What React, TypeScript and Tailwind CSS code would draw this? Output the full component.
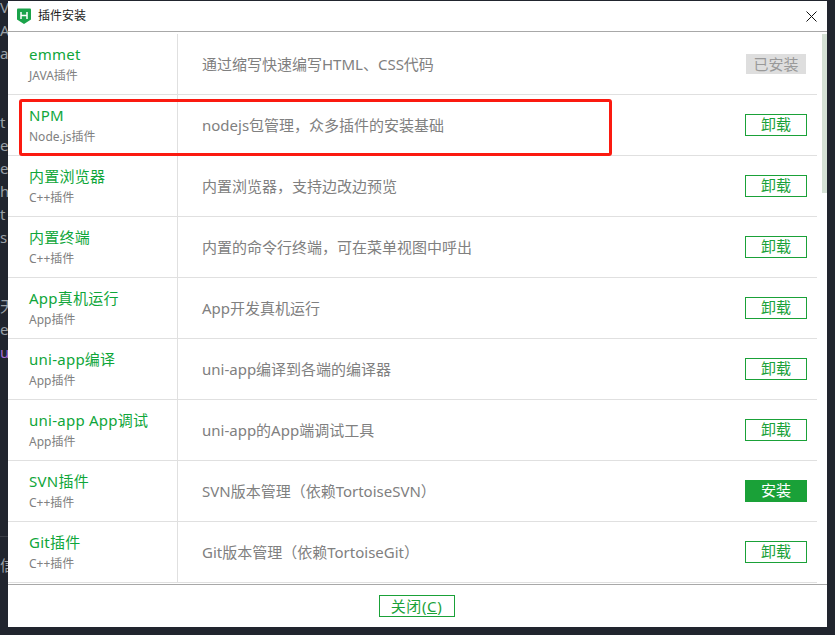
const plugins = [
  { name: "emmet", sub: "JAVA插件", desc: "通过缩写快速编写HTML、CSS代码", action: "installed" },
  { name: "NPM", sub: "Node.js插件", desc: "nodejs包管理，众多插件的安装基础", action: "remove" },
  { name: "内置浏览器", sub: "C++插件", desc: "内置浏览器，支持边改边预览", action: "remove" },
  { name: "内置终端", sub: "C++插件", desc: "内置的命令行终端，可在菜单视图中呼出", action: "remove" },
  { name: "App真机运行", sub: "App插件", desc: "App开发真机运行", action: "remove" },
  { name: "uni-app编译", sub: "App插件", desc: "uni-app编译到各端的编译器", action: "remove" },
  { name: "uni-app App调试", sub: "App插件", desc: "uni-app的App端调试工具", action: "remove" },
  { name: "SVN插件", sub: "C++插件", desc: "SVN版本管理（依赖TortoiseSVN）", action: "install" },
  { name: "Git插件", sub: "C++插件", desc: "Git版本管理（依赖TortoiseGit）", action: "remove" },
];

const editorLines = ["V", "A", "a", "", "", "t", "e", "e", "h", "t", "s", "", "", "天", "e", "u"];

function Action({ kind }: { kind: string }) {
  if (kind === "installed") {
    return (
      <span className="mr-px flex h-5 w-[60px] items-center justify-center bg-[#dedede] text-[15px] text-[#999999]">
        已安装
      </span>
    );
  }
  if (kind === "install") {
    return (
      <button className="h-[22px] w-[62px] bg-[#1aa138] pb-[2px] text-[15px] leading-[20px] text-white">安装</button>
    );
  }
  return (
    <button className="h-[22px] w-[62px] border border-[#1aa138] bg-white pb-[2px] text-[15px] leading-[18px] text-[#1aa138]">
      卸载
    </button>
  );
}

function Row({ plugin }: { plugin: (typeof plugins)[number] }) {
  return (
    <div className="flex h-[61px] shrink-0 border-b border-[#e0e0e0]">
      <div className="flex w-[170px] flex-col border-r border-[#e0e0e0] pl-[21px] pt-[9px]">
        <span className="h-[23px] text-[15px] leading-[23px] tracking-[0.25px] text-[#0fa63a]">{plugin.name}</span>
        <span className="mt-[1px] h-[18px] text-xs leading-[18px] text-[#808080]">{plugin.sub}</span>
      </div>
      <div className="flex flex-1 items-center justify-between pl-6 pr-[10px]">
        <span className="text-[15px] leading-[22px] text-[#808080]">{plugin.desc}</span>
        <Action kind={plugin.action} />
      </div>
    </div>
  );
}

export default function App() {
  return (
    <div className="relative flex h-[635px] w-[835px] overflow-hidden bg-[#21252e] font-['Noto_Sans','Noto_Sans_CJK_SC',sans-serif]">
      <div className="-mt-1 w-2 shrink-0 overflow-hidden text-[15px] leading-[23px] text-[#9aa0a6]">
        {editorLines.map((line, i) => (
          <div key={i} className={`h-[23px] ${line === "u" ? "text-[#a36ad0]" : ""}`}>
            {line}
          </div>
        ))}
        <div className="mt-[172px] h-px bg-[#3a3d45]" />
        <div className="mt-[17px] h-[23px]">信</div>
      </div>

      <div className="mt-[1px] flex h-[626px] w-[819px] flex-col bg-white">
        <div className="flex h-[31px] shrink-0 items-center justify-between border-b border-[#a8a8a8] pl-[9px] pr-[10px]">
          <div className="flex items-center gap-[7px]">
            <svg width="14" height="16" viewBox="0 0 14 16">
              <path d="M0 1.500Q0 .5 1 .5h12q1 0 1 1v10L7 16 0 11.500z" fill="#1aa34a" />
              <path d="M4 4v7M10 4v7M4 7.500h6" stroke="#fff" strokeWidth="1.500" fill="none" />
            </svg>
            <span className="text-xs text-[#222222]">插件安装</span>
          </div>
          <svg width="11" height="11" viewBox="0 0 11 11">
            <path d="M.5.5l10 10M10.500.5l-10 10" stroke="#111" strokeWidth="1" fill="none" />
          </svg>
        </div>

        <div className="flex h-[552px] shrink-0 pt-[2px]">
          <div className="flex w-[809px] flex-col">
            {plugins.map((p) => (
              <Row key={p.name} plugin={p} />
            ))}
          </div>
          <div className="ml-[5px] h-[159px] w-[5px] bg-[#d5e1d5]" />
        </div>

        <div className="flex flex-1 items-center justify-center border-t border-[#a8a8a8]">
          <button className="mr-[2px] h-[22px] w-[76px] border border-[#1aa138] text-[15px] leading-none tracking-[0.6px] text-[#1aa138]">
            关闭(<span className="underline">C</span>)
          </button>
        </div>
      </div>

      <div className="absolute left-[19px] top-[99px] h-[57px] w-[593px] rounded-[3px] border-[3px] border-[#fb1a10]" />
    </div>
  );
}
